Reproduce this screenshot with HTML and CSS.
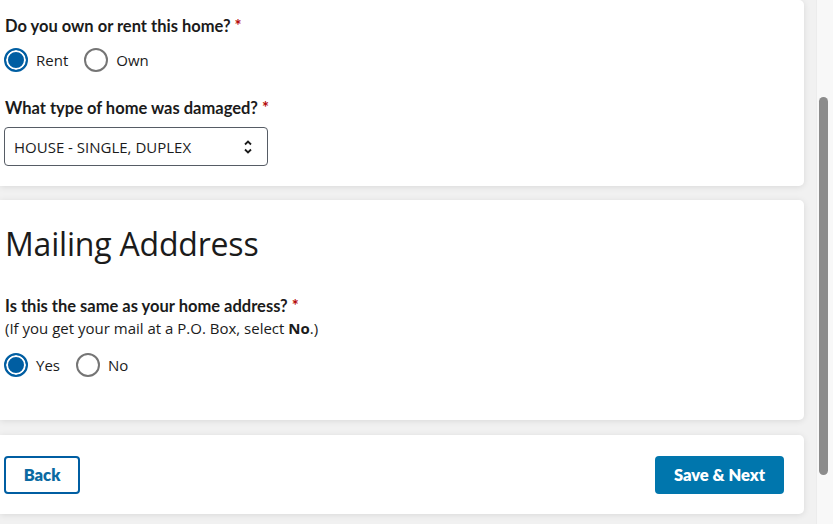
FILE: index.html
```html
<!DOCTYPE html>
<html lang="en">
<head>
<meta charset="utf-8">
<title>Home details</title>
<link rel="stylesheet" href="styles.css">
</head>
<body>
<div class="page">
  <main class="main">
    <section class="card card-home">
      <fieldset class="field">
        <legend class="label">Do you own or rent this home? <span class="req">*</span></legend>
        <div class="radios">
          <label class="radio"><span class="dot checked"></span><span>Rent</span></label>
          <label class="radio"><span class="dot"></span><span>Own</span></label>
        </div>
      </fieldset>
      <div class="field field-select">
        <div class="label">What type of home was damaged? <span class="req">*</span></div>
        <div class="select">
          <span>HOUSE - SINGLE, DUPLEX</span>
          <svg class="chev" width="10" height="16" viewBox="0 0 10 16"><path d="M2 5.5 L5 2.5 L8 5.5" fill="none" stroke="#1b1b1b" stroke-width="1.8"/><path d="M2 10.5 L5 13.5 L8 10.5" fill="none" stroke="#1b1b1b" stroke-width="1.8"/></svg>
        </div>
      </div>
    </section>

    <section class="card card-mail">
      <h2 class="heading">Mailing Adddress</h2>
      <fieldset class="field">
        <legend class="label">Is this the same as your home address? <span class="req">*</span></legend>
        <p class="hint">(If you get your mail at a P.O. Box, select <b>No</b>.)</p>
        <div class="radios">
          <label class="radio"><span class="dot checked"></span><span>Yes</span></label>
          <label class="radio"><span class="dot"></span><span>No</span></label>
        </div>
      </fieldset>
    </section>

    <section class="card card-actions">
      <button class="btn btn-outline">Back</button>
      <button class="btn btn-primary">Save &amp; Next</button>
    </section>
  </main>
  <div class="scrollbar"><div class="thumb"></div></div>
</div>
</body>
</html>
```
FILE: styles.css
```css
html, body {
  margin: 0;
  padding: 0;
  height: 100%;
  overflow: hidden;
}
body {
  background: #f1f1f1;
  color: #1b1b1b;
  font-family: "Open Sans", "Noto Sans", sans-serif;
}
.page {
  display: flex;
  height: 524px;
}
.main {
  width: 804px;
  margin-right: 12px;
  display: flex;
  flex-direction: column;
  gap: 14px;
}
.card {
  background: #fff;
  border-radius: 0 5px 5px 0;
  box-shadow: 0 1px 6px rgba(0,0,0,0.10);
  padding: 0 20px 0 5px;
}
.card-home {
  height: 186px;
  box-sizing: border-box;
  padding-top: 15px;
}
.card-mail {
  height: 220px;
  box-sizing: border-box;
  padding-top: 22px;
}
.card-actions {
  height: 79px;
  box-sizing: border-box;
  margin-top: 1px;
  padding: 21px 20px 0 4px;
  display: flex;
  justify-content: space-between;
  align-items: flex-start;
}
.field {
  border: 0;
  margin: 0;
  padding: 0;
  min-width: 0;
}
.label {
  font-family: "Lato", "Open Sans", sans-serif;
  font-weight: 700;
  font-size: 16.5px;
  line-height: 22px;
  padding: 0;
}
.req {
  color: #b50909;
}
.radios {
  display: flex;
  gap: 16px;
  margin-top: 11px;
  margin-left: -1px;
}
.radio {
  display: flex;
  align-items: center;
  gap: 8px;
  font-size: 15px;
  line-height: 24px;
}
.dot {
  width: 24px;
  height: 24px;
  box-sizing: border-box;
  border-radius: 50%;
  border: 2px solid #757575;
  background: #fff;
}
.dot.checked {
  background: #005ea2;
  border-color: #005ea2;
  box-shadow: inset 0 0 0 2px #fff;
}
.field-select {
  margin-top: 25px;
}
.select {
  margin-top: 8px;
  margin-left: -1px;
  width: 264px;
  height: 39px;
  box-sizing: border-box;
  border: 1px solid #565c65;
  border-radius: 4px;
  display: flex;
  align-items: center;
  justify-content: space-between;
  padding: 0 14px 0 9px;
  font-size: 15px;
}
.chev {
  display: block;
}
.heading {
  margin: 0;
  font-weight: 400;
  font-size: 32px;
  line-height: 44px;
  letter-spacing: -0.2px;
}
.card-mail .field {
  margin-top: 29px;
}
.hint {
  margin: 0;
  font-size: 15px;
  line-height: 23px;
}
.hint b {
  font-weight: 700;
}
.card-mail .radios {
  margin-top: 13px;
}
.btn {
  font-family: "Lato", "Open Sans", sans-serif;
  font-weight: 800;
  font-size: 16.5px;
  height: 38px;
  border-radius: 4px;
  cursor: pointer;
}
.btn-outline {
  width: 76px;
  background: #fff;
  color: #0b6aa2;
  border: 2px solid #005ea2;
}
.btn-primary {
  width: 129px;
  background: #0076ad;
  color: #fff;
  border: 0;
}
.scrollbar {
  width: 17px;
  background: #f8f8f8;
  border-left: 1px solid #ececec;
  box-sizing: border-box;
  padding-top: 97px;
}
.thumb {
  width: 9px;
  height: 378px;
  margin-left: 2px;
  background: #8c8c8c;
  border-radius: 5px;
}
```
